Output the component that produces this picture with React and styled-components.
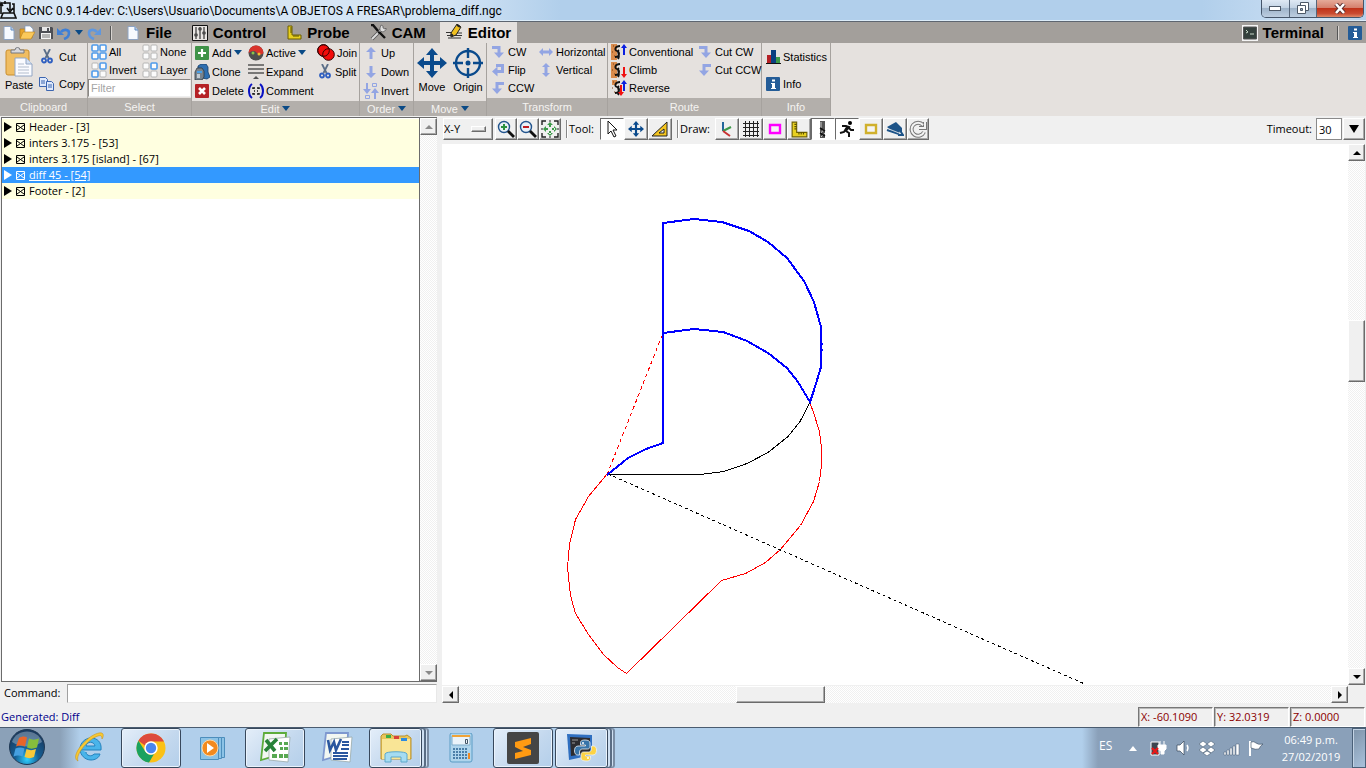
import React from "react";
import styled, { createGlobalStyle, css } from "styled-components";

const ui = `"Open Sans", "Noto Sans", sans-serif`;
const arial = `"Liberation Sans", Arial, sans-serif`;

const Global = createGlobalStyle`
  * { box-sizing: border-box; }
  body { margin: 0; background: #f0f0f0; font: 11px/16px ${ui}; color: #000; }
  button, input, select { font: inherit; color: inherit; margin: 0; padding: 0; border: 0; background: none; border-radius: 0; }
  svg { display: block; flex: none; }
`;

const Shell = styled.div`
  display: flex;
  flex-direction: column;
  min-height: 100vh;
`;

/* ---------- window title ---------- */
const TitleBar = styled.header`
  display: flex;
  height: 22px;
  background: linear-gradient(90deg, #dbe8f5 0, #d3e4f5 450px, #b1cfeb 560px, #b1cfeb 88%, #cfe1f4 97%, #b5d1ec);
  border-bottom: 1px solid #5d6570;
  box-shadow: inset 0 -1px #dcecf9;
`;
const Title = styled.h1`
  flex: 1;
  margin: 0;
  padding-left: 5px;
  font: 12px/22px Roboto, ${ui};
  white-space: nowrap;
`;
const WindowButtons = styled.div`
  display: flex;
  height: 18px;
  margin-right: 2px;
  border: 1px solid #45556a;
  border-top: 0;
  border-radius: 0 0 5px 5px;
  overflow: hidden;
`;
const WindowButton = styled.button`
  display: flex;
  align-items: center;
  justify-content: center;
  width: ${(p) => p.$w}px;
  background: ${(p) =>
    p.$close
      ? "linear-gradient(#e5aa99, #d5806d 45%, #c0331a 50%, #c94b32 80%, #e08867)"
      : "linear-gradient(#dfe9f4, #c3d3e4 45%, #9fb4ca 50%, #bccde0)"};
  & + & { border-left: 1px solid #56667a; }
`;

/* ---------- tab strip ---------- */
const TabBar = styled.nav`
  display: flex;
  align-items: stretch;
  height: 21px;
  padding-right: 2px;
  background: #a39f9b;
`;
const QuickTools = styled.div`
  display: flex;
  width: 119px;
  padding-left: 1px;
`;
const QuickButton = styled.button`
  display: flex;
  align-items: center;
  justify-content: center;
  width: ${(p) => p.$w || 18}px;
`;
const Divider = styled.span`
  width: 2px;
  height: 14px;
  margin: 0 7px;
  align-self: center;
  border-left: 1px solid #555;
  border-right: 1px solid #d8d4d0;
`;
const Tabs = styled.div`
  display: flex;
  flex: 1;
  gap: 8px;
`;
const Tab = styled.button`
  display: flex;
  align-items: center;
  gap: 5px;
  padding: 0 6px;
  font: bold 15px/20px ${arial};
  background: ${(p) => (p.$active ? "#e5e1de" : "transparent")};
`;

/* ---------- ribbon ---------- */
const Ribbon = styled.section`
  display: flex;
  height: 73px;
  background: #e5e1de;
  font: 11px/16px ${arial};
`;
const Group = styled.div`
  display: flex;
  flex-direction: column;
  width: ${(p) => p.$w}px;
  border-right: 1px solid #a6a29e;
`;
const GroupBody = styled.div`
  flex: 1;
  display: grid;
  grid-template-columns: ${(p) => p.$cols};
  grid-auto-flow: column;
  grid-template-rows: ${(p) => p.$rows};
  padding-left: ${(p) => p.$pad ?? 3}px;
`;
const GroupLabel = styled.div`
  display: flex;
  align-items: center;
  justify-content: center;
  gap: 3px;
  height: ${(p) => (p.$menu ? 15 : 18)}px;
  background: #b3afab;
  color: #f5f3f1;
`;
const Command = styled.button`
  display: flex;
  align-items: center;
  gap: 2px;
  white-space: nowrap;
`;
const BigCommand = styled.button`
  display: flex;
  flex-direction: column;
  align-items: center;
  justify-content: center;
  grid-row: 1 / -1;
  gap: ${(p) => p.$gap || 0}px;
`;
const IconBox = styled.span`
  display: flex;
  justify-content: center;
  width: ${(p) => p.$w || 16}px;
`;
const FilterInput = styled.input`
  grid-column: 1 / -1;
  width: 100%;
  height: 18px;
  padding: 0 2px;
  background: #fff;
  border: 1px solid #8a8784;
  border-right-color: #eee;
  border-bottom-color: #eee;
  &::placeholder { color: #a5a5a5; opacity: 1; }
`;
const SelectGroup = styled.div`
  flex: 1;
  display: grid;
  grid-template-columns: 51px 1fr;
  grid-template-rows: 18px 18px 18px;
  & > button { margin-left: 3px; }
`;

/* ---------- workspace ---------- */
const Workspace = styled.main`
  flex: 1;
  display: grid;
  grid-template-columns: 437px minmax(0, 1fr);
  column-gap: 5px;
  min-height: 0;
`;
const Side = styled.section`
  display: flex;
  flex-direction: column;
  padding: 1px 0 3px 1px;
`;
const TreeBox = styled.div`
  flex: 1;
  display: flex;
  border: 1px solid #6b6b6b;
  border-right: 0;
`;
const Tree = styled.ul`
  flex: 1;
  margin: 0;
  padding: 1px 0 0;
  list-style: none;
  background: #fff;
  border-right: 1px solid #6b6b6b;
`;
const TreeRow = styled.li`
  display: flex;
  align-items: center;
  gap: 4px;
  height: 16px;
  padding-left: 2px;
  white-space: nowrap;
  background: ${(p) => (p.$selected ? "#3399ff" : "#ffffe0")};
  color: ${(p) => (p.$selected ? "#fff" : "#000")};
  text-decoration: ${(p) => (p.$selected ? "underline" : "none")};
`;
const CommandLine = styled.label`
  display: flex;
  align-items: center;
  gap: 7px;
  height: 20px;
  margin-top: 1px;
  padding-left: 3px;
  & > input { flex: 1; height: 19px; background: #fff; border: 1px solid #a0a0a0; border-right-color: #e8e8e8; border-bottom-color: #e8e8e8; }
`;

const raised = css`
  border: 1px solid;
  border-color: #fff #6b6b6b #6b6b6b #fff;
  box-shadow: inset -1px -1px #a8a8a8;
`;
const ScrollTrack = styled.div`
  display: flex;
  flex-direction: ${(p) => (p.$row ? "row" : "column")};
  ${(p) => (p.$row ? "height: 17px;" : "width: 17px;")}
  background: repeating-conic-gradient(#fff 0 25%, #f0f0f0 0 50%) 0 0 / 2px 2px;
`;
const ScrollButton = styled.button`
  display: flex;
  align-items: center;
  justify-content: center;
  width: 17px;
  height: 17px;
  flex: none;
  background: #f0f0f0;
  color: ${(p) => (p.$off ? "#8a8a8a" : "#000")};
  ${raised}
`;
const TrackSpace = styled.span`
  flex: ${(p) => p.$grow} 1 0;
`;
const Thumb = styled.span`
  flex: ${(p) => p.$grow} 1 0;
  background: #f0f0f0;
  ${raised}
`;

const View = styled.section`
  display: flex;
  flex-direction: column;
  min-width: 0;
  padding-bottom: 3px;
`;
const Toolbar = styled.div`
  display: flex;
  align-items: center;
  height: 28px;
  padding: 0 1px 2px;
`;
const AxisPicker = styled.label`
  display: flex;
  align-items: center;
  width: 50px;
  height: 22px;
  margin-right: 2px;
  ${raised}
  & > select { appearance: none; width: 27px; outline: 0; }
  & > i { width: 15px; height: 6px; ${raised} }
`;
const ToolButton = styled.button`
  display: flex;
  align-items: center;
  justify-content: center;
  width: ${(p) => (p.$wide ? 24 : 22)}px;
  height: 22px;
  ${(p) =>
    p.$on
      ? "background:#fff;border:1px solid;border-color:#6b6b6b #fff #fff #6b6b6b;"
      : raised}
`;
const ToolLabel = styled.span`
  width: ${(p) => p.$w}px;
  margin-left: 5px;
  padding-left: 2px;
  line-height: 18px;
  border-left: 1px solid #888;
  box-shadow: inset 1px 0 #fff;
`;
const Timeout = styled.label`
  display: flex;
  align-items: center;
  gap: 4px;
  margin-left: auto;
  & > input { width: 26px; height: 22px; margin-right: 1px; padding-left: 2px; background: #fff; border: 1px solid #8a8a8a; }
`;
const Plot = styled.div`
  flex: 1;
  display: flex;
  min-height: 0;
  padding-right: 1px;
`;
const Canvas = styled.div`
  flex: 1;
  min-width: 0;
  overflow: hidden;
  background: #fff;
`;
const HorizontalRow = styled.div`
  display: flex;
  padding-right: 18px;
  margin-top: 1px;
  & > div { flex: 1; }
`;

/* ---------- status and taskbar ---------- */
const Status = styled.footer`
  display: flex;
  align-items: center;
  height: 21px;
  padding: 0 0 0 1px;
  color: #00008b;
  & > p { flex: 1; margin: 0; }
`;
const Coord = styled.output`
  width: 75px;
  height: 20px;
  margin-right: 1px;
  padding-left: 2px;
  line-height: 18px;
  color: #8b0000;
  border: 1px solid;
  border-color: #777 #fff #fff #777;
  box-shadow: inset 1px 1px #b8b8b8;
`;
const Taskbar = styled.footer`
  display: flex;
  height: 41px;
  gap: 2px;
  border-top: 1px solid #4a5c70;
  background: linear-gradient(90deg, #8ba1b8 0, #8ba1b8 60px, #b1cfeb 80px, #b1cfeb calc(100% - 284px), #8aa0b9 calc(100% - 268px), #8aa0b9);
`;
const StartButton = styled.button`
  display: flex;
  justify-content: center;
  width: 53px;
  margin-right: 4px;
`;
const TaskButton = styled.button`
  display: flex;
  align-items: center;
  justify-content: center;
  width: ${(p) => (p.$stack ? 53 : 60)}px;
  margin-right: ${(p) => (p.$stack ? 7 : 0)}px;
  border-radius: 3px;
  ${(p) =>
    p.$open &&
    `border: 1px solid #38485c; background: linear-gradient(135deg, #e4eef9, #c3d8ee 60%, #b4cfea);
     box-shadow: inset 0 0 0 1px #eaf3fc${p.$stack ? ", 3px 0 0 -1px #cfe0f2, 4px 0 0 #5a6d84, 6px 0 0 -1px #cfe0f2, 7px 0 0 #7a8da4" : ""};`}
`;
const Tray = styled.div`
  display: flex;
  align-items: center;
  margin-left: auto;
  gap: 8px;
  color: #fff;
`;
const Language = styled.span`
  width: 17px;
  line-height: 36px;
  font-size: 12px;
  align-self: start;
`;
const Clock = styled.time`
  width: 66px;
  margin-left: 6px;
  text-align: center;
  line-height: 17px;
  white-space: nowrap;
`;
const ShowDesktop = styled.button`
  align-self: stretch;
  width: 14px;
  background: linear-gradient(135deg, #7e93a9, #a9c1db);
  border: 1px solid #4a6078;
  box-shadow: inset 1px 1px #c3d3e4;
`;

/* ---------- icons ---------- */
const S = ({ w = 16, h = w, vb, children }) => (
  <svg width={w} height={h} viewBox={vb || `0 0 ${w} ${h}`} aria-hidden="true">{children}</svg>
);
const Caret = ({ c = "#0a4a86" }) => <S w={8} h={5}><path d="M0 0h8L4 5z" fill={c} /></S>;
const TimeoutCaret = () => <S w={10} h={8}><path d="M0 0h10L5 8z" fill="#000" /></S>;
const Tri = ({ d }) => (
  <S w={8}><path d={{ up: "M0 6h8L4 2z", down: "M0 2h8L4 6z", left: "M6 0v8L2 4z", right: "M2 0v8l4-4z" }[d]} fill="currentColor" /></S>
);
const AppIcon = () => (
  <S w={17} h={20}><g fill="none" stroke="#111" strokeWidth="1.6"><path d="M1 14V3h3M3 6L1 3 0 6M4 3h6v7M7 8l3 4 3-4M5 1v3M12 4h2v9M3 13h11l2 5H1z" /></g></S>
);
const Page = () => (
  <S w={12} h={14}><path d="M1 .5h7l3 3.500v9.500H1z" fill="#f7faff" stroke="#8ea4c4" /><path d="M8 1v3h3" fill="#c6d8ee" stroke="#5f8ac0" /></S>
);
const Folder = () => (
  <S><path d="M1 4h5l1 1h6v8H1z" fill="#e8a42a" stroke="#a87412" strokeWidth=".6" /><path d="M6 1h5l3 3v5H6z" fill="#fff" stroke="#7d9cc4" strokeWidth=".7" /><path d="M1 14L4 7h12l-4 7z" fill="#fbc95a" stroke="#b57e1b" strokeWidth=".6" /></S>
);
const Floppy = () => (
  <S w={14}><path d="M0 1h13l1 1v11H0z" fill="#4d4f55" /><path d="M3 1h8v4H3z" fill="#e7e7e7" /><path d="M8 2h2v3H8z" fill="#4d4f55" /><path d="M2 7h10v6H2z" fill="#f4f4f4" /><path d="M3 9h8M3 11h8" stroke="#777" /></S>
);
const Undo = ({ flip, c = "#3e7fd6" }) => (
  <S w={14}><g transform={flip ? "matrix(-1 0 0 1 14 0)" : undefined}><path d="M4 6c2-3 8-3 8 1 0 3-2 5-5 6" fill="none" stroke={c} strokeWidth="2.600" /><path d="M0 2v7h7z" fill={c} /></g></S>
);
const Sliders = () => (
  <S><path d="M.5.5h15v15H.5z" fill="#e9e6e3" stroke="#111" /><path d="M4 2v12M8 2v12M12 2v12" stroke="#111" /><path d="M2.500 10h3M6.500 4h3M10.500 8h3" stroke="#111" strokeWidth="2.500" /><path d="M3.500 10h1M7.500 4h1M11.500 8h1" stroke="#fff" /></S>
);
const LRuler = ({ w = 15 }) => (
  <S w={w} vb="0 0 15 15"><path d="M1 1h4v9h9v4H1z" fill="#e8d020" stroke="#6d5f00" /><path d="M3 3h2M3 5h2M3 7h2M7 10v2M9 10v2M11 10v2" stroke="#5b5000" /></S>
);
const ToolsX = () => (
  <S w={17}><path d="M2 15L12 5" stroke="#555" strokeWidth="3.600" /><path d="M2 15L12 5" stroke="#ddd" strokeWidth="2" /><path d="M10 4l1-3 2 1v2l2 1 1-1v2l-3 2-3-1z" fill="#ddd" stroke="#555" strokeWidth=".7" /><path d="M1 1l2 0 5 6M8 8l2 1 5 5" stroke="#111" strokeWidth="2.400" fill="none" /></S>
);
const Pencil = () => (
  <S w={17}><path d="M0 8.500h6M9 9h7M1 11.500h15M2 14h13" stroke="#333" /><path d="M5 9L11 0l4 3-5 8-5 2z" fill="#f0c020" stroke="#222" /><path d="M11 1l3 2M5 10l2 2" stroke="#222" strokeWidth="2" /></S>
);
const Terminal = () => (
  <S><path d="M0 0h16v16H0z" fill="#f5f5f5" /><path d="M1.500 2h13v12h-13z" fill="#34403c" stroke="#555" /><path d="M4 5l2 2-2 1M8 9h4" stroke="#c8d8c8" fill="none" /></S>
);
const Info = () => (
  <S w={14}><rect width="14" height="14" rx="1" fill="#245c97" /><path d="M6 2.500h3v2H6zM5 6h4v5h1v1H5v-1h1V7H5z" fill="#fff" /></S>
);
const Clipboard = () => (
  <S w={28} h={30}><rect x="1" y="3" width="23" height="25" rx="2" fill="#f0bd62" stroke="#c98d2c" /><path d="M6 6V3h4a2.500 2.500 0 015 0h4v3z" fill="#d8d8dc" stroke="#77797f" /><path d="M10 11h11l6 6v12H10z" fill="#fafbff" stroke="#93a6c4" /><path d="M21 11v6h6" fill="#d4e1f4" stroke="#93a6c4" /><path d="M13 17h6M13 20h11M13 23h11M13 26h11" stroke="#b3bdcd" /></S>
);
const Scissors = () => (
  <S w={12} h={15}><path d="M3 0l4.500 9M9 0L4.500 9" stroke="#5b6e88" strokeWidth="1.800" /><g fill="none" stroke="#2f5fc0" strokeWidth="1.800"><circle cx="3" cy="11.500" r="2" /><circle cx="9" cy="11.500" r="2" /></g></S>
);
const Copy = () => (
  <S w={16} h={14}><g fill="#dfe9fb" stroke="#3d66b0"><path d="M.5.5h6l2 2v7h-8z" /><path d="M7.500 4.500h5l2 2v7h-7z" /></g><path d="M2 4h4M2 6h4M9 8h4M9 10h4" stroke="#3d66b0" /></S>
);
const Squares = ({ on = "" }) => (
  <S w={16}>{[[1, 1], [9, 1], [1, 9], [9, 9]].map(([x, y], i) => (
    <rect key={i} x={x} y={y} width="6" height="6" rx="1" fill="#fbfbfb" stroke={on.includes(i) ? "#4f9bea" : "#b5b5b5"} strokeWidth={on.includes(i) ? 1.6 : 1} />
  ))}</S>
);
const Plus = () => <S w={14}><rect width="14" height="14" rx="1" fill="#3f9247" /><path d="M7 3v8M3 7h8" stroke="#fff" strokeWidth="2.200" /></S>;
const Delete = () => <S w={14}><rect width="14" height="14" rx="1" fill="#b52125" /><path d="M4 4l6 6M10 4l-6 6" stroke="#fff" strokeWidth="2.600" /></S>;
const Clone = () => (
  <S><path d="M4 4V2l3-2h5l2 3v5l2 5-3 2-5-1z" fill="#2f6fb0" stroke="#173f6a" strokeWidth=".8" /><path d="M1 8l2-4h5l2 3v6l-2 3H1z" fill="#78838d" stroke="#30383f" strokeWidth=".8" /><path d="M3 7h5v2H3z" fill="#4aa0e8" /><path d="M3 10h3v4H3z" fill="#c3ccd4" /></S>
);
const Active = () => (
  <S><circle cx="8" cy="8" r="7.500" fill="#4e4e4e" /><path d="M.5 8a7.500 7.500 0 0115 0C12 11 10 9 8 7S3 6 .5 8z" fill="#d9332b" /><circle cx="5" cy="8" r="1.500" fill="#8ac34a" /><circle cx="11" cy="9" r="1.500" fill="#f0c030" /></S>
);
const Expand = () => <S><path d="M0 1h16M0 5h16M0 9h16" stroke="#555" strokeWidth="1.600" /><path d="M5 15l3-3 3 3z" fill="#555" /></S>;
const Comment = () => (
  <S><path d="M4 1C0 4 0 12 4 15M12 1c4 3 4 11 0 14" fill="none" stroke="#0a12c4" strokeWidth="2" /><path d="M5 6V5h2M9 5h2v1M5 10v1h2M9 11h2v-1M6 8h1M9 8h1" fill="none" stroke="#111" strokeWidth="1.500" /></S>
);
const Join = () => <S w={18} h={17}><g fill="#f30b0b" stroke="#300"><circle cx="6.500" cy="6.500" r="5.800" /><circle cx="11.500" cy="10.500" r="5.800" /></g><circle cx="6.500" cy="6.500" r="5.800" fill="none" stroke="#300" /></S>;
const lilac = "#93a5e3";
const paths = {
  up: "M7 1l5 5H8.500v7h-3V6H2z",
  down: "M7 13l5-5H8.500V1h-3v7H2z",
  cw: "M1 1h8.500v6.500H13L8 13 3 7.500h3.500V4H1z",
  ccw: "M13 1H4.500v6.500H1L6 13l5-5.500H7.500V4H13z",
  flip: "M5 1h8v9H6.500v3.500L1 8.500l5.500-5V7H10V4H5z",
  horiz: "M0 7l4-4v2.500h6V3l4 4-4 4V8.500H4V11z",
  vert: "M7 0l4 4H8.500v6H11l-4 4-4-4h2.500V4H3z",
};
const Arrow = ({ k }) => <S w={14}><path d={paths[k]} fill={lilac} /></S>;
const Swap = () => <S><path d="M5 0v6h3l-4 5-4-5h3V0zM13 16v-6h3l-4-5-4 5h3v6z" fill={lilac} /><path d="M9.500.5h4v3h-4zM2.500 12.500h4v3h-4z" fill="none" stroke={lilac} /></S>;
const Move = ({ w = 30 }) => (
  <S w={w} vb="0 0 30 30"><path d="M15 0l6 7h-4v6h6V9l7 6-7 6v-4h-6v6h4l-6 7-6-7h4v-6H7v4l-7-6 7-6v4h6V7H9z" fill="#0a4a8c" /></S>
);
const Origin = () => <S w={30}><g fill="none" stroke="#0a4a8c" strokeWidth="2.400"><circle cx="15" cy="15" r="12" /><path d="M15 0v10M15 20v10M0 15h10M20 15h10" /></g><circle cx="15" cy="15" r="2.500" fill="#0a4a8c" /></S>;
const Route = ({ k }) => (
  <S><path d={k === "rev" ? "M1 0h5v5H1z" : "M0 0h6v16H0z"} fill="#d98b4c" /><path d="M2 2h1M4 5h1M1 8h1M3 12h1" stroke="#7b4010" /><path d="M9 2C4 2 3 6 6 7s3 6-2 6M8 6C5 8 10 11 7 15" fill="none" stroke="#111" strokeWidth="1.800" />
    {k !== "climb" && <path d="M13 0l3 4h-2v7h-2V4h-2z" fill="#0a1fe0" />}
    {k === "climb" && <path d="M13 16l3-4h-2V5h-2v7h-2z" fill="#f01010" />}
    {k === "rev" && <path d="M10 16l3-4h-2V5H9v7H7z" fill="#f01010" />}
  </S>
);
const Bars = () => <S w={15} h={14}><path d="M1 5h4v8H1z" fill="#b52025" /><path d="M5 0h5v13H5z" fill="#0a3f80" /><path d="M10 7h4v6h-4z" fill="#3d9a4a" /><path d="M0 13.500h15" stroke="#111" /></S>;
const Zoom = ({ minus }) => (
  <S w={18}><circle cx="7" cy="7" r="5.500" fill="#e9f1f8" stroke="#23558e" strokeWidth="1.400" /><path d="M11 11l6 6" stroke="#111" strokeWidth="2.800" />{minus ? <path d="M4 7h6" stroke="#c01c20" strokeWidth="2" /> : <path d="M4 7h6M7 4v6" stroke="#2c9140" strokeWidth="2" />}</S>
);
const Fit = () => (
  <S w={18}><path d="M1 5V1h4M13 1h4v4M17 13v4h-4M5 17H1v-4" fill="none" stroke="#222" strokeWidth="1.400" /><path d="M8 1h2M8 17h2M1 8v2M17 8v2" stroke="#222" /><path d="M9 2l3 3H6zM9 16l3-3H6zM2 9l3-3v6zM16 9l-3-3v6zM8 4h2v3H8zM8 11h2v3H8zM4 8h3v2H4zM11 8h3v2h-3z" fill="#3d9a4a" /></S>
);
const Pointer = () => <S w={14} h={18}><path d="M3 1v13l3-3 3 6 2-1-3-6h4z" fill="#fff" stroke="#111" /></S>;
const Triangle = () => <S w={18}><path d="M1 16L16 2v14z" fill="#f4c41e" stroke="#222" /><path d="M8 13l5-4v4z" fill="#f0f0f0" stroke="#222" /></S>;
const Axes = () => <S w={18}><path d="M5 2v9" stroke="#23669c" strokeWidth="2" /><path d="M5 11l8-4" stroke="#3d9a4a" strokeWidth="2" /><path d="M5 11l7 5" stroke="#c83232" strokeWidth="2" /></S>;
const Grid = () => <S w={18}><path d="M3.500 1v16M7.500 1v16M11.500 1v16M15.500 1v16M1 3.500h16M1 7.500h16M1 11.500h16M1 15.500h16" stroke="#222" /></S>;
const Box = ({ c }) => <S w={14} h={12}><path d="M2 2h10v8H2z" fill="#f4f4f4" stroke={c} strokeWidth="2.400" /></S>;
const Mill = () => <S w={8} h={17}><path d="M1 0h5v17H1z" fill="#555" /><path d="M2 1v6M5 8L2 12M6 12l-4 4" stroke="#ccc" /><path d="M1 7l5 3M1 12l5 3" stroke="#111" strokeWidth="1.500" /></S>;
const Runner = () => <S w={18}><circle cx="12" cy="3" r="2" /><path d="M4 6h4l3 1-3 4 3 2v4M9 7l-3 5-4 1M10 7l3 3h3" fill="none" stroke="#111" strokeWidth="2" /></S>;
const Camera = () => <S w={18}><path d="M1 7l9-5 6 6-3 5-7-2z" fill="#1c5388" /><path d="M1 10l12 4M15 8v4l2 3h-5" stroke="#1c5388" strokeWidth="2" fill="none" /><path d="M3 9l10 4" stroke="#f0f0f0" strokeWidth=".8" /></S>;
const Refresh = () => <S w={18}><path d="M14 5a6.500 6.500 0 101 7M16 2v6h-6" fill="none" stroke="#777" strokeWidth="4" /><path d="M14 5a6.500 6.500 0 101 7M16 2v6h-6" fill="none" stroke="#f3f3f3" strokeWidth="2" /></S>;

const StartOrb = () => (
  <S w={38} h={38}>
    <defs><radialGradient id="orb" cx="50%" cy="85%" r="75%"><stop offset="0" stopColor="#2fd0ff" /><stop offset=".45" stopColor="#155f95" /><stop offset="1" stopColor="#193b60" /></radialGradient></defs>
    <circle cx="19" cy="19" r="17.500" fill="url(#orb)" stroke="#1f3854" />
    <path d="M4 14C8 0 30 0 34 14 25 20 13 20 4 14z" fill="#dbe9f4" opacity=".35" />
    <path d="M11 10c3-2 6-2 8-.5l-2 9c-3-1.500-6-1.500-9 0z" fill="#e8652a" /><path d="M21 10.500c3 1.500 6 1.500 10 0l-2 9c-4 1.500-7 1.500-10 0z" fill="#86bd3c" />
    <path d="M7.500 20.500c3-1.500 6-1.500 9 0l-2 8c-3-1.500-6-1.500-9 0z" fill="#46a0e0" /><path d="M18.500 21c3 1.500 6 1.500 9.500 0l-2 8c-3 1.500-6 1.500-9.500 0z" fill="#f8c93a" />
  </S>
);
const IE = () => (
  <S w={32}><path d="M8 18h20c1-8-4-12-10-12S7 11 7 17s5 11 11 11c4 0 8-2 9-6h-6c-2 3-8 2-8-2M13 14c1-5 8-5 9 0z" fill="#49b4ea" stroke="#2482bd" fillRule="evenodd" /><path d="M5 29C-4 25 14 3 26 1c5-1 5 3 3 6 0-3-1-4-4-3C15 7 2 23 5 29z" fill="#f8c832" stroke="#c9951c" strokeWidth=".6" /></S>
);
const Chrome = () => (
  <S w={30}><circle cx="15" cy="15" r="14.500" fill="#fbc116" /><path d="M2.400 7.800A14.500 14.500 0 0128 8.500H15a6.500 6.500 0 00-6 4z" fill="#dd4b3e" /><path d="M2.400 7.800L9 18a6.500 6.500 0 009 3l-5 8.500A14.500 14.500 0 012.400 7.800z" fill="#1aa260" /><circle cx="15" cy="15" r="6.700" fill="#fff" /><circle cx="15" cy="15" r="5.200" fill="#4a86f0" /></S>
);
const Media = () => (
  <S w={28}><g fill="#8cc3e6" stroke="#4d8ebc"><path d="M8.500 3.500h17v20h-17z" /><path d="M5.500 3.500h17v21h-17z" /><path d="M1.500 3.500h18v22h-18z" /></g><circle cx="11" cy="14" r="8" fill="#f28a1e" stroke="#fbd9a8" /><path d="M8 9l7 5-7 5z" fill="#fff" /></S>
);
const Office = ({ word }) => {
  const c = word ? "#2b579f" : "#278238";
  return (
    <S w={32}><path d="M5 1h22l-1 20-24 7z" fill="#f2f7f2" stroke={word ? "#7e98cf" : "#5dac3b"} strokeWidth="1.800" /><path d="M10 7l21-2-2 25-19-2z" fill="#fff" stroke="#9aa" strokeWidth=".8" />
      {word ? <><path d="M21 10h7M21 13h7M20 17h8M12 21h15M12 24h15M12 27h14" stroke={c} strokeWidth="1.800" /><path d="M7 8l2 10 4-8 2 8 5-11" fill="none" stroke={c} strokeWidth="2.600" /></>
        : <><path d="M20 10h3v3h-3zM25 10h4v3h-4zM21 15h3v3h-3zM25 15h4v3h-4zM13 22h5v4h-5zM20 22h4v4h-4zM25 22h4v4h-4z" fill="#58a852" /><path d="M7 8l9 11M18 7L6 19" stroke={c} strokeWidth="3.600" /></>}
    </S>
  );
};
const Explorer = () => (
  <S w={32}><path d="M1 4l2-2h8l2 2h12l2-1 4 3v21H1z" fill="#e9c65c" stroke="#b8912e" /><path d="M2 7h28v20H2z" fill="#f9e596" /><path d="M6 3h5v3H6z" fill="#3cae46" /><path d="M14 4h5v3h-5z" fill="#d8423a" /><path d="M21 6h6v3h-6z" fill="#2e8be0" /><path d="M5 30v-8c0-3 22-3 22 0v8h-6v-5H11v5z" fill="#a5dcf2" stroke="#5ca8cc" /></S>
);
const Calculator = () => (
  <S w={24} h={30}><rect x="1" y="0" width="22" height="29" rx="2" fill="#aed4ec" stroke="#5b9cc5" /><path d="M3 3h18v9H3z" fill="#eaf3fa" stroke="#7eaccb" /><path d="M3 2h18v2H3z" fill="#f0a338" /><path d="M16.500 6.500h2v4h-2z" fill="none" stroke="#456" /><g fill="#4a7ea8">{[0, 1, 2, 3].map((r) => [0, 1, 2, 3, 4].map((c) => <rect key={`${r}${c}`} x={4 + c * 3} y={15 + r * 3} width="2" height="2" />))}</g><path d="M19 20h2v6h-2z" fill="#ef8a22" /></S>
);
const Sublime = () => <S w={32}><rect width="32" height="32" rx="2" fill="#454545" /><path d="M8 10l16-4v6l-8 3 8 3v5L8 27v-6l8-2-8-4z" fill="#ff9a12" /></S>;
const snake = "M19 8c-4.500 0-4.500 2-4.500 3v2h5v1H12c-3 0-3.500 3-3.500 5s1 4 3 4h2v-3c0-1.500 1-3 3-3h5c1.500 0 2.500-1 2.500-2.500V11c0-2-2-3-5-3z";
const Python = () => (
  <S w={32}><path d="M1 2l25 1v20L3 28z" fill="#2f6fc0" /><path d="M4 5l20 1v15L5 24z" fill="#2c2c30" /><path d="M6 8h6M6 11h3" stroke="#999" />
    <g stroke="#eef3f8" strokeWidth=".8"><path d={snake} fill="#3874a8" /><path d={snake} transform="rotate(180 19.500 18.500)" fill="#fdd344" /></g>
    <circle cx="17" cy="11" r="1" fill="#fff" /><circle cx="22" cy="26" r="1" fill="#fff" /></S>
);
const Battery = () => <S w={17}><path d="M1 2h8v13H1z" fill="#3d4650" stroke="#fff" /><path d="M10 1v4M14 1v4M8 5h8v4l-2 2v3h-3v-3L8 9z" fill="#fff" stroke="#fff" /><path d="M2 8l6 6M8 8l-6 6" stroke="#e81818" strokeWidth="2.400" /></S>;
const Speaker = () => <S><path d="M2 5h3l4-4v14l-4-4H2z" fill="#fff" stroke="#34465a" strokeWidth=".7" /><path d="M12 5q2 3 0 6" fill="none" stroke="#fff" strokeWidth="1.400" /></S>;
const Dropbox = () => <S><path d="M4 1l4 3-4 3-4-3zM12 1l4 3-4 3-4-3zM4 7l4 3-4 3-4-3zM12 7l4 3-4 3-4-3zM8 11l4 2-4 3-4-3z" fill="#fff" stroke="#4a5f76" strokeWidth=".6" /></S>;
const Signal = () => <S w={17}><path d="M1 12h2v3H1zM4 10h2v5H4zM7 8h2v7H7zM10 6h2v9h-2zM13 4h3v11h-3z" fill="#fff" stroke="#4a5f76" strokeWidth=".5" /></S>;
const Flag = () => <S><path d="M2 1v15" stroke="#fff" strokeWidth="2" /><path d="M3 2q3-1 5 1t7 1q-3 2-4 5-3 1-8-1z" fill="#fff" stroke="#34465a" strokeWidth=".6" /></S>;

/* ---------- data ---------- */
const blocks = ["Header - [3]", "inters 3.175 - [53]", "inters 3.175 [island] - [67]", "diff 45 - [54]", "Footer - [2]"];

const Cmd = ({ icon, w, children, menu }) => (
  <Command type="button"><IconBox $w={w}>{icon}</IconBox>{children}{menu && <Caret />}</Command>
);

function Toolpath() {
  return (
    <svg width="906" height="540" viewBox="442 144 906 540" role="img" aria-label="Toolpath" shapeRendering="crispEdges" fill="none">
      <g stroke="#f00" transform="translate(-.5 -.5)">
        <path d="M810 402l4 11 6 19 2 16v17l-2 17-6 20-13 24-20 24-15 13-20 11-24 7-95 93-9-6-14-13-15-20-13-21-5-18-3-28 2-23 6-25 13-23 19-23" />
        <path d="M663 335L608 474" strokeDasharray="4 3" />
      </g>
      <g stroke="#000">
        <path d="M608 474.500h92l24-3 23-8 21-11 20-16 12-15 10-19" />
        <path d="M608 474l479 211" strokeDasharray="3 3" />
      </g>
      <path d="M607 475l21-17 18-9 17-6V223l31-4 28 3 27 9 19 11 19 16 17 23 10 21 7 25v40l-7 23-4 12-12-20-11-14-19-15-21-12-24-9-29-3-31 4" stroke="#00f" strokeWidth="2" />
      <path d="M822.500 343v2M822.500 349v2" stroke="#00f" />
    </svg>
  );
}

export default function App() {
  return (
    <Shell>
      <Global />
      <TitleBar>
        <AppIcon />
        <Title>bCNC 0.9.14-dev: C:\Users\Usuario\Documents\A OBJETOS A FRESAR\problema_diff.ngc</Title>
        <WindowButtons>
          <WindowButton $w={27} aria-label="Minimize"><S w={13} h={6}><rect x=".5" y=".5" width="11" height="4" fill="#fff" stroke="#4d5968" /></S></WindowButton>
          <WindowButton $w={27} aria-label="Restore"><S w={13} h={13}><path d="M3.500.5h8v8h-8z" fill="#fff" stroke="#4d5968" /><path d="M.5 3.500h8v8h-8z" fill="#fff" stroke="#4d5968" /><path d="M3.500 6.500h2v2h-2z" fill="#9ab" stroke="#4d5968" /></S></WindowButton>
          <WindowButton $w={47} $close aria-label="Close"><S w={12} h={11}><path d="M2 1l8 9M10 1L2 10" stroke="#5c3030" strokeWidth="4.400" /><path d="M2 1l8 9M10 1L2 10" stroke="#fff" strokeWidth="2.600" /></S></WindowButton>
        </WindowButtons>
      </TitleBar>

      <TabBar>
        <QuickTools>
          <QuickButton $w={16} aria-label="New"><Page /></QuickButton>
          <QuickButton $w={20} aria-label="Open"><Folder /></QuickButton>
          <QuickButton aria-label="Save"><Floppy /></QuickButton>
          <QuickButton aria-label="Undo"><Undo /></QuickButton>
          <QuickButton $w={12} aria-label="Undo history"><Caret /></QuickButton>
          <QuickButton aria-label="Redo"><Undo flip c="#5f97de" /></QuickButton>
          <Divider />
        </QuickTools>
        <Tabs>
          <Tab><IconBox><Page /></IconBox>File</Tab>
          <Tab><Sliders />Control</Tab>
          <Tab><IconBox><LRuler /></IconBox>Probe</Tab>
          <Tab><ToolsX />CAM</Tab>
          <Tab $active><Pencil />Editor</Tab>
        </Tabs>
        <Tab><Terminal />Terminal</Tab>
        <Divider />
        <QuickButton aria-label="About"><Info /></QuickButton>
      </TabBar>

      <Ribbon>
        <Group $w={88}>
          <GroupBody $cols="36px 1fr" $rows="27px 27px" $pad={1}>
            <BigCommand><Clipboard />Paste</BigCommand>
            <Cmd w={20} icon={<Scissors />}>Cut</Cmd>
            <Cmd w={20} icon={<Copy />}>Copy</Cmd>
          </GroupBody>
          <GroupLabel>Clipboard</GroupLabel>
        </Group>
        <Group $w={104}>
          <SelectGroup>
            <Cmd icon={<Squares on="0123" />}>All</Cmd>
            <Cmd icon={<Squares />}>None</Cmd>
            <Cmd icon={<Squares on="12" />}>Invert</Cmd>
            <Cmd icon={<Squares on="1" />}>Layer</Cmd>
            <FilterInput placeholder="Filter" aria-label="Filter" />
          </SelectGroup>
          <GroupLabel>Select</GroupLabel>
        </Group>
        <Group $w={168}>
          <GroupBody $cols="54px 69px 1fr" $rows="19px 19px 19px" $pad={2}>
            <Cmd icon={<Plus />} menu>Add</Cmd>
            <Cmd icon={<Clone />}>Clone</Cmd>
            <Cmd icon={<Delete />}>Delete</Cmd>
            <Cmd icon={<Active />} menu>Active</Cmd>
            <Cmd icon={<Expand />}>Expand</Cmd>
            <Cmd icon={<Comment />}>Comment</Cmd>
            <Cmd w={18} icon={<Join />}>Join</Cmd>
            <Cmd w={16} icon={<Scissors />}>Split</Cmd>
          </GroupBody>
          <GroupLabel $menu>Edit <Caret /></GroupLabel>
        </Group>
        <Group $w={54}>
          <GroupBody $cols="1fr" $rows="19px 19px 19px">
            <Cmd icon={<Arrow k="up" />}>Up</Cmd>
            <Cmd icon={<Arrow k="down" />}>Down</Cmd>
            <Cmd icon={<Swap />}>Invert</Cmd>
          </GroupBody>
          <GroupLabel $menu>Order <Caret /></GroupLabel>
        </Group>
        <Group $w={73}>
          <GroupBody $cols="36px 36px" $rows="57px" $pad={0}>
            <BigCommand $gap={1}><Move />Move</BigCommand>
            <BigCommand $gap={1}><Origin />Origin</BigCommand>
          </GroupBody>
          <GroupLabel $menu>Move <Caret /></GroupLabel>
        </Group>
        <Group $w={121}>
          <GroupBody $cols="48px 1fr" $rows="18px 18px 18px">
            <Cmd icon={<Arrow k="cw" />}>CW</Cmd>
            <Cmd icon={<Arrow k="flip" />}>Flip</Cmd>
            <Cmd icon={<Arrow k="ccw" />}>CCW</Cmd>
            <Cmd icon={<Arrow k="horiz" />}>Horizontal</Cmd>
            <Cmd icon={<Arrow k="vert" />}>Vertical</Cmd>
          </GroupBody>
          <GroupLabel>Transform</GroupLabel>
        </Group>
        <Group $w={154}>
          <GroupBody $cols="86px 1fr" $rows="18px 18px 18px">
            <Cmd icon={<Route k="conv" />}>Conventional</Cmd>
            <Cmd icon={<Route k="climb" />}>Climb</Cmd>
            <Cmd icon={<Route k="rev" />}>Reverse</Cmd>
            <Cmd icon={<Arrow k="cw" />}>Cut CW</Cmd>
            <Cmd icon={<Arrow k="ccw" />}>Cut CCW</Cmd>
          </GroupBody>
          <GroupLabel>Route</GroupLabel>
        </Group>
        <Group $w={69}>
          <GroupBody $cols="1fr" $rows="27px 27px">
            <Cmd icon={<Bars />}>Statistics</Cmd>
            <Cmd icon={<Info />}>Info</Cmd>
          </GroupBody>
          <GroupLabel>Info</GroupLabel>
        </Group>
      </Ribbon>

      <Workspace>
        <Side>
          <TreeBox>
            <Tree>
              {blocks.map((b, i) => (
                <TreeRow key={b} $selected={i === 3}>
                  <S w={8} h={10}><path d="M0 0v10l8-5z" fill="currentColor" /></S>
                  <S w={9}><path d="M.5.5h8v8h-8zM1 2l7 5M8 2L1 7" fill="none" stroke="currentColor" /></S>
                  {b}
                </TreeRow>
              ))}
            </Tree>
            <ScrollTrack>
              <ScrollButton $off aria-label="Scroll up"><Tri d="up" /></ScrollButton>
              <TrackSpace $grow={1} />
              <ScrollButton $off aria-label="Scroll down"><Tri d="down" /></ScrollButton>
            </ScrollTrack>
          </TreeBox>
          <CommandLine>Command:<input type="text" /></CommandLine>
        </Side>

        <View>
          <Toolbar>
            <AxisPicker><select aria-label="View plane"><option>X-Y</option></select><i /></AxisPicker>
            <ToolButton aria-label="Zoom in"><Zoom /></ToolButton>
            <ToolButton aria-label="Zoom out"><Zoom minus /></ToolButton>
            <ToolButton aria-label="Fit"><Fit /></ToolButton>
            <ToolLabel $w={34}>Tool:</ToolLabel>
            <ToolButton $wide $on aria-label="Select"><Pointer /></ToolButton>
            <ToolButton $wide aria-label="Pan"><Move w={16} /></ToolButton>
            <ToolButton $wide aria-label="Ruler"><Triangle /></ToolButton>
            <ToolLabel $w={38}>Draw:</ToolLabel>
            <ToolButton $wide aria-label="Axes"><Axes /></ToolButton>
            <ToolButton $wide aria-label="Grid"><Grid /></ToolButton>
            <ToolButton $wide aria-label="Margins"><Box c="#f0f" /></ToolButton>
            <ToolButton $wide aria-label="Probe"><LRuler w={17} /></ToolButton>
            <ToolButton $wide $on aria-label="Paths"><Mill /></ToolButton>
            <ToolButton $wide $on aria-label="Rapid"><Runner /></ToolButton>
            <ToolButton $wide aria-label="Workarea"><Box c="#d0b02c" /></ToolButton>
            <ToolButton $wide aria-label="Camera"><Camera /></ToolButton>
            <ToolButton aria-label="Refresh"><Refresh /></ToolButton>
            <Timeout>Timeout:<input type="text" defaultValue="30" /></Timeout>
            <ToolButton aria-label="Timeout list"><TimeoutCaret /></ToolButton>
          </Toolbar>
          <Plot>
            <Canvas><Toolpath /></Canvas>
            <ScrollTrack>
              <ScrollButton aria-label="Scroll up"><Tri d="up" /></ScrollButton>
              <TrackSpace $grow={161} />
              <Thumb $grow={60} />
              <TrackSpace $grow={289} />
              <ScrollButton aria-label="Scroll down"><Tri d="down" /></ScrollButton>
            </ScrollTrack>
          </Plot>
          <HorizontalRow>
            <ScrollTrack $row>
              <ScrollButton aria-label="Scroll left"><Tri d="left" /></ScrollButton>
              <TrackSpace $grow={278} />
              <Thumb $grow={87} />
              <TrackSpace $grow={508} />
              <ScrollButton aria-label="Scroll right"><Tri d="right" /></ScrollButton>
            </ScrollTrack>
          </HorizontalRow>
        </View>
      </Workspace>

      <Status>
        <p>Generated: Diff</p>
        <Coord>X: -60.1090</Coord>
        <Coord>Y: 32.0319</Coord>
        <Coord>Z: 0.0000</Coord>
      </Status>

      <Taskbar>
        <StartButton aria-label="Start"><StartOrb /></StartButton>
        <TaskButton aria-label="Internet Explorer"><IE /></TaskButton>
        <TaskButton $open aria-label="Chrome"><Chrome /></TaskButton>
        <TaskButton aria-label="Media Player"><Media /></TaskButton>
        <TaskButton $open aria-label="Excel"><Office /></TaskButton>
        <TaskButton aria-label="Word"><Office word /></TaskButton>
        <TaskButton $open $stack aria-label="Explorer"><Explorer /></TaskButton>
        <TaskButton aria-label="Calculator"><Calculator /></TaskButton>
        <TaskButton $open aria-label="Sublime Text"><Sublime /></TaskButton>
        <TaskButton $open $stack aria-label="Python"><Python /></TaskButton>
        <Tray>
          <Language>ES</Language>
          <IconBox $w={18}><S w={8} h={5}><path d="M0 5h8L4 0z" fill="#fff" /></S></IconBox>
          <Battery /><Speaker /><Dropbox /><Signal /><Flag />
          <Clock>06:49 p.m.<br />27/02/2019</Clock>
          <ShowDesktop aria-label="Show desktop" />
        </Tray>
      </Taskbar>
    </Shell>
  );
}
